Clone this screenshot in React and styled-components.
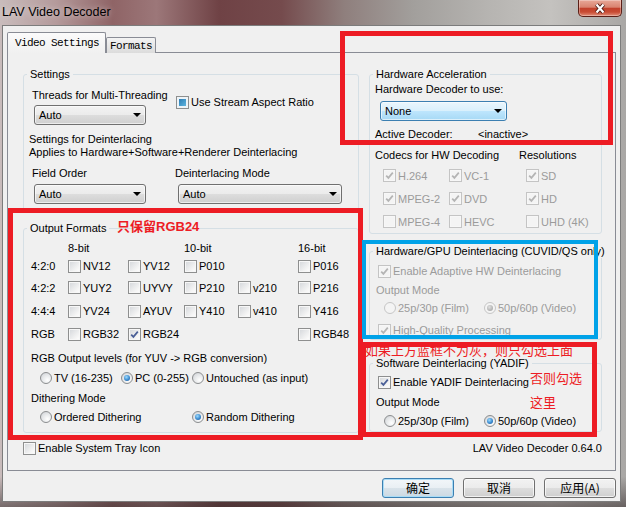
import { Fragment } from "react";
import styled, { createGlobalStyle } from "styled-components";

const RED = "#ed1c24";
const BLUE = "#00a2e8";
const GREY_TEXT = "#9b9b9b";

const formatRows = [
  ["4:2:0", ["NV12", "YV12", "P010", null, "P016"]],
  ["4:2:2", ["YUY2", "UYVY", "P210", "v210", "P216"]],
  ["4:4:4", ["YV24", "AYUV", "Y410", "v410", "Y416"]],
  ["RGB", ["RGB32", "RGB24", null, null, "RGB48"]],
];

const codecRows = [
  [["H.264", true], ["VC-1", true], ["SD", true]],
  [["MPEG-2", true], ["DVD", true], ["HD", true]],
  [["MPEG-4", false], ["HEVC", false], ["UHD (4K)", false]],
];

function Check({ checked, disabled, mixed, children }) {
  return (
    <CheckItem $disabled={disabled}>
      <CheckBox $disabled={disabled} $mixed={mixed}>
        {checked && (
          <svg width="11" height="11" viewBox="0 0 11 11">
            <path
              d="M2.2 5.6 L4.4 7.9 L8.8 2.6"
              fill="none"
              stroke={disabled ? "#b4b4b4" : "#4a5f97"}
              strokeWidth="1.7"
            />
          </svg>
        )}
      </CheckBox>
      {children}
    </CheckItem>
  );
}

function Radio({ checked, disabled, children }) {
  return (
    <CheckItem $disabled={disabled}>
      <RadioDot $disabled={disabled}>{checked && <RadioPip $disabled={disabled} />}</RadioDot>
      {children}
    </CheckItem>
  );
}

function Combo({ value, width, hot, mt, ml }) {
  return (
    <ComboBox $w={width} $hot={hot} $mt={mt} $ml={ml}>
      <span>{value}</span>
      <Arrow />
    </ComboBox>
  );
}

export default function App() {
  return (
    <>
      <GlobalStyle />
      <Window>
        <TitleBar>
          <Title>LAV Video Decoder</Title>
          <CloseButton>
            <svg width="14" height="11" viewBox="0 0 14 11">
              <path d="M3.5 1.5 L10.5 9.5 M10.5 1.5 L3.5 9.5" stroke="#4a1a14" strokeWidth="4" />
              <path d="M3.5 1.5 L10.5 9.5 M10.5 1.5 L3.5 9.5" stroke="#ffffff" strokeWidth="2.2" />
            </svg>
          </CloseButton>
        </TitleBar>

        <Client>
          <Tabs>
            <Tab $active>Video Settings</Tab>
            <Tab>Formats</Tab>
          </Tabs>

          <Panel>
            <Columns>
              <Column>
                <Group>
                  <Legend>Settings</Legend>
                  <GroupBody $pad="7px 0 8px 8px">
                    <FlexRow>
                      <Field $w={144}>
                        <Label>Threads for Multi-Threading</Label>
                        <Combo value="Auto" width={112} mt={3} ml={2} />
                      </Field>
                      <Line $mt={7} $ml={0}>
                        <Check mixed>Use Stream Aspect Ratio</Check>
                      </Line>
                    </FlexRow>
                    <Note>
                      Settings for Deinterlacing
                      <br />
                      Applies to Hardware+Software+Renderer Deinterlacing
                    </Note>
                    <FlexRow $mt={7}>
                      <Field $w={143}>
                        <Label>Field Order</Label>
                        <Combo value="Auto" width={112} mt={4} ml={2} />
                      </Field>
                      <Field>
                        <Label>Deinterlacing Mode</Label>
                        <Combo value="Auto" width={164} mt={4} ml={3} />
                      </Field>
                    </FlexRow>
                  </GroupBody>
                </Group>

                <Group>
                  <Legend>Output Formats</Legend>
                  <GroupBody $pad="5px 0 8px 7px">
                    <FormatGrid>
                      <span />
                      <span>8-bit</span>
                      <span />
                      <span>10-bit</span>
                      <span />
                      <span>16-bit</span>
                      {formatRows.map(([label, items]) => (
                        <Fragment key={label}>
                          <span>{label}</span>
                          {items.map((item, i) =>
                            item ? (
                              <Check key={i} checked={item === "RGB24"}>
                                {item}
                              </Check>
                            ) : (
                              <span key={i} />
                            )
                          )}
                        </Fragment>
                      ))}
                    </FormatGrid>
                    <Line $mt={6}>RGB Output levels (for YUV -&gt; RGB conversion)</Line>
                    <RadioRow $cols="81px 71px auto" $mt={6} $pl={9}>
                      <Radio>TV (16-235)</Radio>
                      <Radio checked>PC (0-255)</Radio>
                      <Radio>Untouched (as input)</Radio>
                    </RadioRow>
                    <Line $mt={6}>Dithering Mode</Line>
                    <RadioRow $cols="152px auto" $mt={5} $pl={9}>
                      <Radio>Ordered Dithering</Radio>
                      <Radio checked>Random Dithering</Radio>
                    </RadioRow>
                  </GroupBody>
                </Group>
              </Column>

              <Column>
                <Group>
                  <Legend>Hardware Acceleration</Legend>
                  <GroupBody $pad="1px 0 0 5px">
                    <Label>Hardware Decoder to use:</Label>
                    <Combo value="None" width={127} hot mt={5} ml={5} />
                    <Line $mt={6}>
                      <InfoKey $w={103}>Active Decoder:</InfoKey>
                      <span>&lt;inactive&gt;</span>
                    </Line>
                    <Line $mt={7}>
                      <InfoKey $w={144}>Codecs for HW Decoding</InfoKey>
                      <span>Resolutions</span>
                    </Line>
                    <CodecGrid>
                      {codecRows.flat().map(([name, on]) => (
                        <Check key={name} checked={on} disabled>
                          {name}
                        </Check>
                      ))}
                    </CodecGrid>
                  </GroupBody>
                </Group>

                <Group $mt={10}>
                  <Legend>Hardware/GPU Deinterlacing (CUVID/QS only)</Legend>
                  <GroupBody $pad="6px 0 2px 6px">
                    <Line $ml={2}>
                      <Check checked disabled>Enable Adaptive HW Deinterlacing</Check>
                    </Line>
                    <Line $mt={5} $grey>Output Mode</Line>
                    <RadioRow $cols="100px auto" $mt={4} $pl={8}>
                      <Radio disabled>25p/30p (Film)</Radio>
                      <Radio checked disabled>50p/60p (Video)</Radio>
                    </RadioRow>
                    <Line $mt={8} $ml={2}>
                      <Check checked disabled>High-Quality Processing</Check>
                    </Line>
                  </GroupBody>
                </Group>

                <Group $mt={16}>
                  <Legend>Software Deinterlacing (YADIF)</Legend>
                  <GroupBody $pad="5px 0 3px 6px">
                    <Line $ml={2}>
                      <Check checked>Enable YADIF Deinterlacing</Check>
                    </Line>
                    <Line $mt={6}>Output Mode</Line>
                    <RadioRow $cols="100px auto" $mt={5} $pl={8}>
                      <Radio>25p/30p (Film)</Radio>
                      <Radio checked>50p/60p (Video)</Radio>
                    </RadioRow>
                  </GroupBody>
                </Group>
              </Column>
            </Columns>

            <Footer>
              <Check>Enable System Tray Icon</Check>
              <span>LAV Video Decoder 0.64.0</span>
            </Footer>
          </Panel>

          <ButtonRow>
            <DialogButton $default>确定</DialogButton>
            <DialogButton>取消</DialogButton>
            <DialogButton>应用(A)</DialogButton>
          </ButtonRow>
        </Client>

        <Marker $x={340} $y={31} $w={273} $h={114} $color={RED} />
        <Marker $x={8} $y={208} $w={355} $h={232} $color={RED} />
        <Marker $x={362} $y={240} $w={236} $h={99} $color={BLUE} $size={4} />
        <Marker $x={361} $y={342} $w={236} $h={95} $color={RED} />

        <Remark $x={117} $y={219} $bold>只保留RGB24</Remark>
        <Remark $x={365} $y={343}>如果上方蓝框不为灰，则只勾选上面</Remark>
        <Remark $x={530} $y={371}>否则勾选</Remark>
        <Remark $x={530} $y={395}>这里</Remark>
      </Window>
    </>
  );
}

const GlobalStyle = createGlobalStyle`
  html, body {
    margin: 0;
    padding: 0;
  }
  body {
    background: #ffffff;
    font-family: "Liberation Sans", Arial, sans-serif;
    font-size: 11px;
    color: #000000;
  }
  * {
    box-sizing: border-box;
  }
`;

const Window = styled.div`
  position: relative;
  width: 626px;
  height: 507px;
  overflow: hidden;
  display: flex;
  flex-direction: column;
  background:
    linear-gradient(180deg, rgba(0, 0, 0, 0) 94%, rgba(50, 40, 40, 0.55) 100%),
    linear-gradient(
      90deg,
      #c9bcbc 0%,
      #b49a9b 9%,
      #8f6466 18%,
      #9c7779 25%,
      #6f4245 35%,
      #754b4d 45%,
      #8f7f7d 55%,
      #a29f9c 66%,
      #b6b4b1 78%,
      #c4c2bf 88%,
      #a9a7a5 100%
    );
`;

const TitleBar = styled.div`
  height: 25px;
  flex: none;
  display: flex;
  justify-content: space-between;
  align-items: flex-start;
`;

const Title = styled.div`
  margin-left: 2px;
  font-size: 12.5px;
  line-height: 24px;
  color: #000000;
  text-shadow: 0 0 6px rgba(255, 255, 255, 0.6);
`;

const CloseButton = styled.div`
  width: 44px;
  height: 17px;
  margin-right: 4px;
  display: flex;
  align-items: center;
  justify-content: center;
  border: 1px solid #5b1f17;
  border-top: none;
  border-radius: 0 0 5px 5px;
  background: linear-gradient(180deg, #e8a898 0%, #d9836f 45%, #c2412b 52%, #c84b33 75%, #e2907a 100%);
  box-shadow: inset 0 0 0 1px rgba(255, 255, 255, 0.3);
`;

const Client = styled.div`
  flex: none;
  height: 477px;
  margin: 0 5px 5px 2px;
  padding: 6px 0 0 4px;
  border: 1px solid #7c7c7c;
  background: #f0f0f0;
`;

const Tabs = styled.div`
  display: flex;
  align-items: flex-end;
  height: 21px;
`;

const Tab = styled.div`
  position: ${(p) => (p.$active ? "relative" : "static")};
  z-index: ${(p) => (p.$active ? 1 : "auto")};
  width: ${(p) => (p.$active ? "99px" : "50px")};
  height: ${(p) => (p.$active ? "21px" : "16px")};
  padding-left: ${(p) => (p.$active ? "7px" : "3px")};
  display: flex;
  align-items: center;
  border: 1px solid #898c95;
  border-bottom: none;
  border-radius: 2px 2px 0 0;
  background: ${(p) =>
    p.$active ? "linear-gradient(180deg, #fbfbfb, #f0f0f0)" : "linear-gradient(180deg, #f3f3f3, #dcdcdc)"};
  font-family: "Liberation Mono", "DejaVu Sans Mono", monospace;
  font-size: 11px;
  letter-spacing: -0.6px;
  white-space: nowrap;
`;

const Panel = styled.div`
  width: 609px;
  height: 419px;
  margin-top: -1px;
  padding: 14px 13px 0 15px;
  border: 1px solid #898c95;
  background: #f0f0f0;
`;

const Columns = styled.div`
  display: grid;
  grid-template-columns: 336px 233px;
  column-gap: 10px;
  align-items: start;
`;

const Column = styled.div`
  display: flex;
  flex-direction: column;
  gap: 8px;
  &:last-child {
    gap: 0;
  }
`;

const Group = styled.fieldset`
  margin: ${(p) => p.$mt || 0}px 0 0 0;
  padding: 0;
  min-width: 0;
  border: 1px solid #d5dfe5;
  border-radius: 3px;
`;

const Legend = styled.legend`
  margin-left: 3px;
  padding: 0 3px;
  line-height: 14px;
  white-space: nowrap;
`;

const GroupBody = styled.div`
  padding: ${(p) => p.$pad};
`;

const FlexRow = styled.div`
  display: flex;
  align-items: flex-start;
  margin-top: ${(p) => p.$mt || 0}px;
`;

const Field = styled.div`
  display: flex;
  flex-direction: column;
  width: ${(p) => (p.$w ? `${p.$w}px` : "auto")};
`;

const Label = styled.div`
  line-height: 14px;
  white-space: nowrap;
`;

const Note = styled.div`
  margin: 8px 0 0 -3px;
  line-height: 13px;
  white-space: nowrap;
`;

const Line = styled.div`
  display: flex;
  align-items: center;
  margin-top: ${(p) => p.$mt || 0}px;
  margin-left: ${(p) => p.$ml || 0}px;
  line-height: 14px;
  white-space: nowrap;
  color: ${(p) => (p.$grey ? GREY_TEXT : "inherit")};
`;

const InfoKey = styled.span`
  width: ${(p) => p.$w}px;
`;

const ComboBox = styled.div`
  width: ${(p) => p.$w}px;
  height: 20px;
  margin: ${(p) => p.$mt}px 0 0 ${(p) => p.$ml}px;
  padding: 0 4px 0 4px;
  display: flex;
  align-items: center;
  justify-content: space-between;
  border: 1px solid ${(p) => (p.$hot ? "#3c7fb1" : "#707070")};
  border-radius: 3px;
  background: ${(p) =>
    p.$hot
      ? "linear-gradient(180deg, #eaf6fd 0%, #d9f0fc 50%, #bee6fd 50%, #a7d9f5 100%)"
      : "linear-gradient(180deg, #f2f2f2 0%, #ebebeb 50%, #dddddd 50%, #cfcfcf 100%)"};
  box-shadow: inset 0 0 0 1px rgba(255, 255, 255, 0.6);
`;

const Arrow = styled.span`
  width: 0;
  height: 0;
  border-top: 4px solid #000000;
  border-left: 4px solid transparent;
  border-right: 4px solid transparent;
`;

const CheckItem = styled.span`
  display: inline-flex;
  align-items: center;
  gap: 2px;
  line-height: 14px;
  white-space: nowrap;
  color: ${(p) => (p.$disabled ? GREY_TEXT : "inherit")};
`;

const CheckBox = styled.span`
  flex: none;
  width: 13px;
  height: 13px;
  display: flex;
  align-items: center;
  justify-content: center;
  border: 1px solid ${(p) => (p.$disabled ? "#c4c4c4" : "#8e8f8f")};
  background: ${(p) =>
    p.$mixed
      ? "linear-gradient(135deg, #1f6ea8, #6cc4ec)"
      : p.$disabled
      ? "#f4f4f4"
      : "linear-gradient(135deg, #d3d6da 0%, #f4f4f4 70%, #ffffff 100%)"};
  box-shadow: ${(p) => (p.$mixed ? "inset 0 0 0 2px #eef4f8" : "inset 0 0 0 1px #f7f7f7")};
`;

const RadioDot = styled.span`
  flex: none;
  width: 12px;
  height: 12px;
  display: flex;
  align-items: center;
  justify-content: center;
  border-radius: 50%;
  border: 1px solid ${(p) => (p.$disabled ? "#c6c6c6" : "#8b8d8f")};
  background: ${(p) =>
    p.$disabled ? "#f4f4f4" : "radial-gradient(circle at 65% 70%, #ffffff 0%, #e4e6e8 55%, #c9ccd0 100%)"};
`;

const RadioPip = styled.span`
  width: 6px;
  height: 6px;
  border-radius: 50%;
  background: ${(p) =>
    p.$disabled
      ? "radial-gradient(circle at 40% 35%, #e0e0e0, #9a9a9a)"
      : "radial-gradient(circle at 40% 35%, #9fdcfd 0%, #3a8ad0 55%, #1b4f8a 100%)"};
`;

const RadioRow = styled.div`
  display: grid;
  grid-template-columns: ${(p) => p.$cols};
  margin-top: ${(p) => p.$mt}px;
  padding-left: ${(p) => p.$pl}px;
`;

const FormatGrid = styled.div`
  display: grid;
  grid-template-columns: 37px 60px 56px 54px 60px 1fr;
  grid-template-rows: 16px 20px 23px 24px 22px;
  align-items: center;
  line-height: 14px;
`;

const CodecGrid = styled.div`
  display: grid;
  grid-template-columns: 66px 77px auto;
  grid-auto-rows: 23px;
  align-items: center;
  margin-top: 2px;
  padding-left: 8px;
`;

const Footer = styled.div`
  display: flex;
  justify-content: space-between;
  align-items: center;
  height: 14px;
  margin-top: 8px;
`;

const ButtonRow = styled.div`
  width: 609px;
  margin-top: 7px;
  display: flex;
  justify-content: flex-end;
  gap: 9px;
`;

const DialogButton = styled.div`
  width: 72px;
  height: 20px;
  display: flex;
  align-items: center;
  justify-content: center;
  border: 1px solid ${(p) => (p.$default ? "#3c7fb1" : "#707070")};
  border-radius: 3px;
  background: ${(p) =>
    p.$default
      ? "linear-gradient(180deg, #f2f6f9 0%, #e9eff4 50%, #d9e3ea 50%, #ccd9e3 100%)"
      : "linear-gradient(180deg, #f2f2f2 0%, #ebebeb 50%, #dddddd 50%, #cfcfcf 100%)"};
  box-shadow: inset 0 0 0 1px ${(p) => (p.$default ? "#a9dcf6" : "rgba(255, 255, 255, 0.7)")};
  font-family: "Noto Sans CJK SC", "Liberation Sans", sans-serif;
  font-size: 12px;
  line-height: 14px;
`;

const Marker = styled.div`
  position: absolute;
  left: ${(p) => p.$x}px;
  top: ${(p) => p.$y}px;
  width: ${(p) => p.$w}px;
  height: ${(p) => p.$h}px;
  border: ${(p) => p.$size || 5}px solid ${(p) => p.$color};
  pointer-events: none;
`;

const Remark = styled.div`
  position: absolute;
  left: ${(p) => p.$x}px;
  top: ${(p) => p.$y}px;
  font-family: "Liberation Sans", "Noto Sans CJK SC", sans-serif;
  font-size: 13px;
  font-weight: ${(p) => (p.$bold ? 700 : 400)};
  line-height: 16px;
  color: ${RED};
  white-space: nowrap;
`;
